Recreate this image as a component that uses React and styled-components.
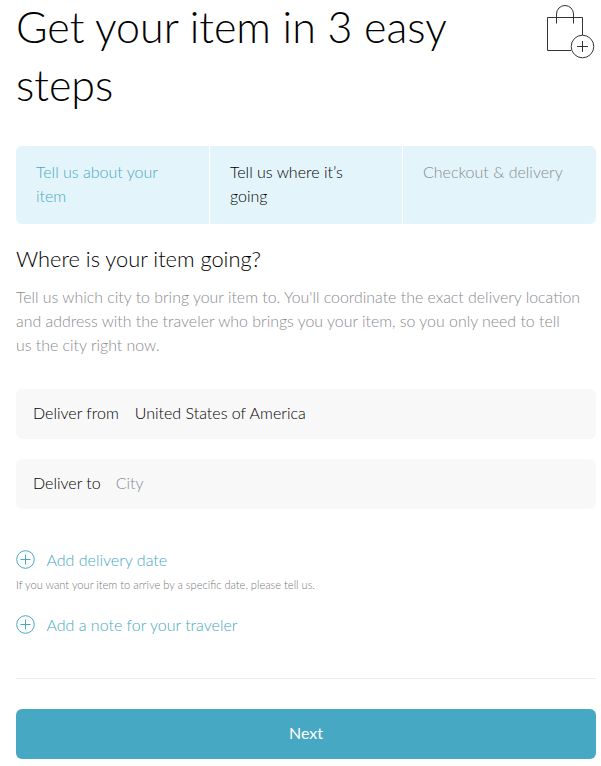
import React from "react";
import styled, { createGlobalStyle } from "styled-components";

const GlobalStyle = createGlobalStyle`
  html, body {
    margin: 0;
    padding: 0;
    background: #fff;
    font-family: "Lato", "Open Sans", sans-serif;
    font-weight: 300;
  }
`;

const Page = styled.div`
  width: 601px;
  height: 766px;
  box-sizing: border-box;
  padding: 0 5px 0 16px;
  overflow: hidden;
`;

const Header = styled.header`
  display: flex;
  justify-content: space-between;
  align-items: flex-start;
  height: 146px;
`;

const Title = styled.h1`
  margin: -2px 0 0;
  width: 470px;
  font-size: 43px;
  line-height: 58px;
  font-weight: 300;
  color: #000;
`;

const BagIcon = styled.svg`
  display: block;
  width: 50px;
  height: 60px;
  flex: none;
`;

const Steps = styled.div`
  display: grid;
  grid-template-columns: 193px 193px 1fr;
  height: 78px;
  background: #e3f5fa;
  border-radius: 6px;
`;

const Step = styled.div`
  padding: 14px 20px;
  font-size: 16px;
  line-height: 24px;
  color: ${(p) => p.$color};
  & + & {
    border-left: 1px solid #fff;
  }
`;

const Heading = styled.h2`
  margin: 22px 0 0;
  font-size: 21.8px;
  line-height: 26px;
  font-weight: 300;
  color: #000;
`;

const Intro = styled.p`
  margin: 13px 0 0;
  font-size: 15.9px;
  line-height: 24px;
  color: #8a8a8f;
`;

const Fields = styled.div`
  display: flex;
  flex-direction: column;
  gap: 20px;
  margin-top: 32px;
`;

const Field = styled.div`
  display: flex;
  align-items: center;
  gap: ${(p) => p.$gap}px;
  height: 50px;
  box-sizing: border-box;
  padding: 0 17px 4px;
  background: #f8f8f8;
  border-radius: 6px;
  font-size: 16px;
  color: #000;
`;

const Placeholder = styled.span`
  color: #8a8a8f;
`;

const AddRow = styled.div`
  display: flex;
  align-items: center;
  gap: 11.5px;
  height: 22px;
  margin-top: ${(p) => p.$top}px;
  font-size: 16px;
  color: #47a8c4;
`;

const Hint = styled.p`
  margin: 8px 0 0;
  font-size: 11.1px;
  line-height: 14px;
  color: #77777c;
`;

const Divider = styled.hr`
  margin: 43px 0 0;
  border: 0;
  border-top: 1px solid #ececec;
`;

const NextButton = styled.button`
  display: block;
  width: 100%;
  height: 50px;
  margin-top: 30px;
  padding: 0 0 4px;
  border: 0;
  border-radius: 6px;
  background: #47a8c4;
  color: #fff;
  font-family: inherit;
  font-weight: 400;
  font-size: 16px;
`;

const PlusIcon = () => (
  <svg width="19" height="19" viewBox="0 0 19 19" fill="none" stroke="#47a8c4" strokeWidth="1">
    <circle cx="9.5" cy="9.5" r="8.8" />
    <path d="M9.5 4.5v10M4.5 9.5h10" />
  </svg>
);

export default function App() {
  return (
    <Page>
      <GlobalStyle />
      <Header>
        <Title>Get your item in 3 easy steps</Title>
        <BagIcon viewBox="0 0 50 60" fill="none" stroke="#333" strokeWidth="1">
          <path d="M36.5 35V17.5H1.5V50.5H25" />
          <path d="M10.5 23.5V14a8.5 8.5 0 0 1 17 0v9.5" />
          <circle cx="36.5" cy="46.5" r="11.3" fill="#fff" />
          <path d="M36.5 41v11M31 46.5h11" />
        </BagIcon>
      </Header>
      <Steps>
        <Step $color="#47a8c4">Tell us about your item</Step>
        <Step $color="#000">Tell us where it’s going</Step>
        <Step $color="#8a8a8f">Checkout &amp; delivery</Step>
      </Steps>
      <Heading>Where is your item going?</Heading>
      <Intro>
        Tell us which city to bring your item to. You'll coordinate the exact delivery location and
        address with the traveler who brings you your item, so you only need to tell
        <br />
        us the city right now.
      </Intro>
      <Fields>
        <Field $gap={16}>
          <span>Deliver from</span>
          <span>United States of America</span>
        </Field>
        <Field $gap={15}>
          <span>Deliver to</span>
          <Placeholder>City</Placeholder>
        </Field>
      </Fields>
      <AddRow $top={39}>
        <PlusIcon />
        Add delivery date
      </AddRow>
      <Hint>If you want your item to arrive by a specific date, please tell us.</Hint>
      <AddRow $top={21}>
        <PlusIcon />
        Add a note for your traveler
      </AddRow>
      <Divider />
      <NextButton>Next</NextButton>
    </Page>
  );
}
